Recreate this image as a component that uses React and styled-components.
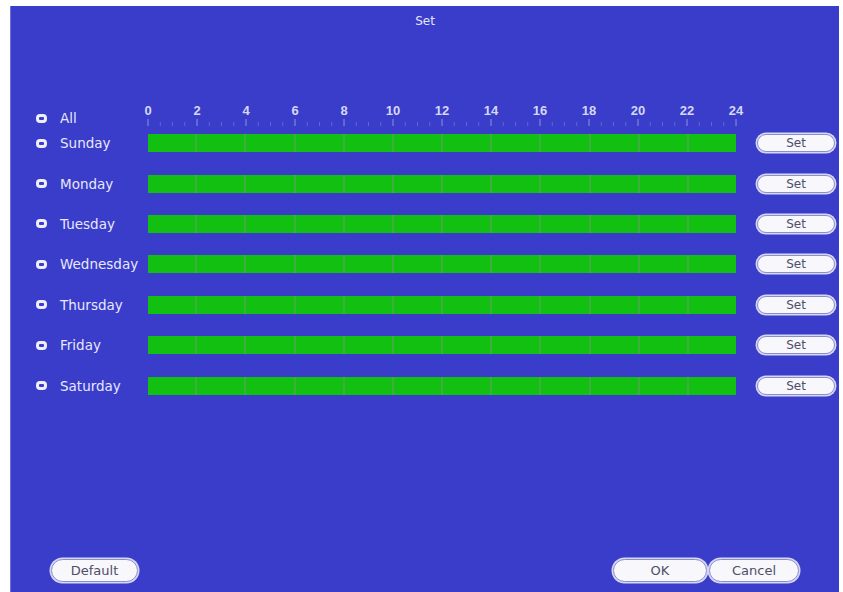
import React from "react";
import styled, { createGlobalStyle } from "styled-components";

const days = [
  "Sunday",
  "Monday",
  "Tuesday",
  "Wednesday",
  "Thursday",
  "Friday",
  "Saturday",
];

const HOUR = 24.5;

const GlobalStyle = createGlobalStyle`
  body {
    margin: 0;
    background: #ffffff;
    font-family: "DejaVu Sans", "Liberation Sans", sans-serif;
  }
`;

const Panel = styled.div`
  box-sizing: border-box;
  margin: 6px 4px 0 10px;
  height: 586px;
  background: #393dc9;
  border-left: 1px solid #6d70d8;
  display: flex;
  flex-direction: column;
`;

const Title = styled.div`
  padding-top: 8px;
  height: 14px;
  line-height: 14px;
  text-align: center;
  font-size: 12px;
  color: #e4e4fa;
`;

const Schedule = styled.div`
  margin-top: 67px;
  display: grid;
  grid-template-columns: 137px 588px 1fr;
  grid-template-rows: 28px;
  grid-auto-rows: 40.4px;
  align-items: center;
`;

const Label = styled.div`
  display: flex;
  align-items: center;
  gap: 13px;
  padding-left: 25px;
  font-size: 13.5px;
  line-height: 16px;
  color: #e8e8fa;
  white-space: nowrap;
  ${({ $top }) => $top && "align-self: end; margin-bottom: -3px;"}
`;

const Radio = styled.span`
  box-sizing: border-box;
  width: 11px;
  height: 9px;
  border: 3px solid #eeeefc;
  border-radius: 4px;
  background: #393dc9;
  flex: none;
`;

const Ruler = styled.svg`
  display: block;
  overflow: visible;
`;

const Bar = styled.div`
  height: 18px;
  display: flex;
  background: #11c011;
`;

const Segment = styled.div`
  flex: 1;
  border-left: ${({ $first }) => ($first ? "none" : "2px solid #3fae3f")};
`;

const PillButton = styled.button`
  box-sizing: border-box;
  width: ${({ $w }) => $w}px;
  height: ${({ $h }) => $h}px;
  padding: 0;
  border: 1px solid #8c8ec6;
  border-radius: 12px;
  box-shadow: 0 0 0 1.5px #d6d7f6;
  background: #f7f7fc;
  color: #4e4e66;
  font-family: "DejaVu Sans", "Liberation Sans", sans-serif;
  font-size: ${({ $fs }) => $fs}px;
  cursor: pointer;
`;

const RowButton = styled(PillButton)`
  justify-self: end;
  margin-right: 4px;
`;

const Footer = styled.div`
  margin-top: auto;
  display: flex;
  justify-content: space-between;
  align-items: center;
  padding: 0 40px 10px 40px;
`;

const Group = styled.div`
  display: flex;
  gap: 2px;
`;

const Scale = () => {
  const ticks = [];
  for (let h = 0; h <= 48; h++) {
    const x = h * (HOUR / 2);
    const major = h % 4 === 0;
    ticks.push(
      <line
        key={h}
        x1={x}
        x2={x}
        y1={major ? 24 : 27}
        y2={31}
        stroke={major ? "#8f93e2" : "#6266d4"}
        strokeWidth="1"
      />
    );
  }
  const labels = [];
  for (let h = 0; h <= 24; h += 2) {
    labels.push(
      <text
        key={h}
        x={h * HOUR}
        y={20}
        textAnchor="middle"
        fontFamily="Liberation Sans, sans-serif"
        fontWeight="bold"
        fontSize="13"
        fill="#d6d7f6"
      >
        {h}
      </text>
    );
  }
  return (
    <Ruler width="588" height="28" viewBox="0 0 588 28">
      {ticks}
      {labels}
    </Ruler>
  );
};

const App = () => {
  return (
    <>
      <GlobalStyle />
      <Panel>
        <Title>Set</Title>
        <Schedule>
          <Label $top>
            <Radio />
            All
          </Label>
          <Scale />
          <div />
          {days.map((day) => (
            <React.Fragment key={day}>
              <Label>
                <Radio />
                {day}
              </Label>
              <Bar>
                {Array.from({ length: 12 }).map((_, i) => (
                  <Segment key={i} $first={i === 0} />
                ))}
              </Bar>
              <RowButton $w={78} $h={18} $fs={12}>
                Set
              </RowButton>
            </React.Fragment>
          ))}
        </Schedule>
        <Footer>
          <PillButton $w={87} $h={23} $fs={13}>
            Default
          </PillButton>
          <Group>
            <PillButton $w={94} $h={23} $fs={13}>
              OK
            </PillButton>
            <PillButton $w={90} $h={23} $fs={13}>
              Cancel
            </PillButton>
          </Group>
        </Footer>
      </Panel>
    </>
  );
};

export default App;
